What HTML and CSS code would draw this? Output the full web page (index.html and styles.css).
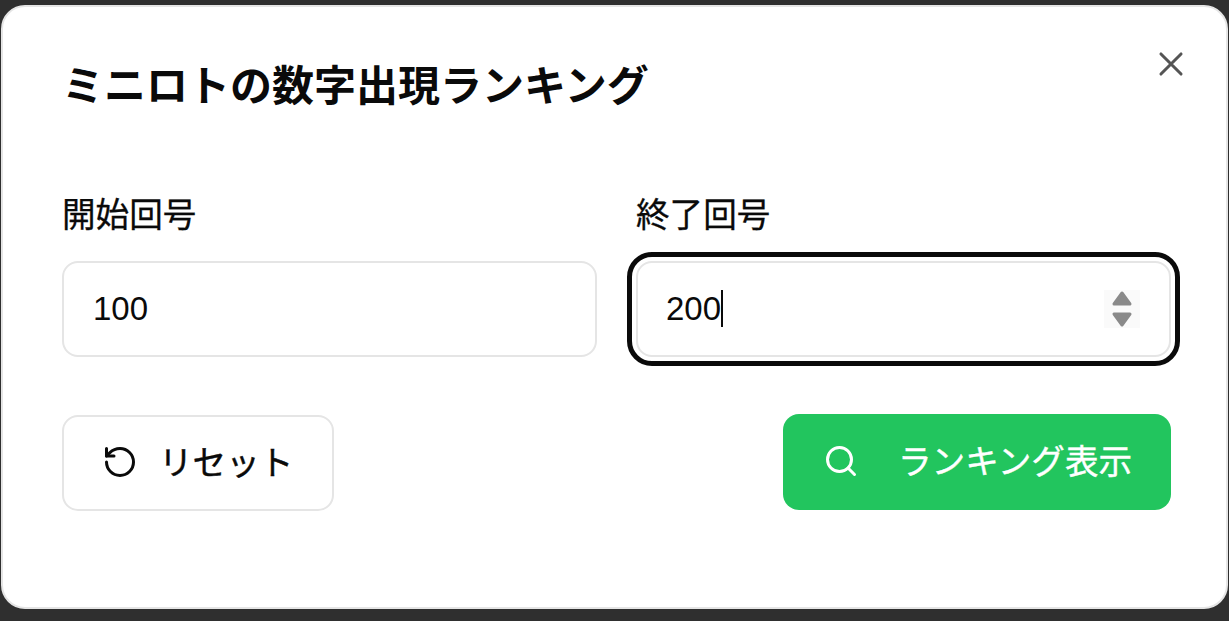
FILE: index.html
```html
<!DOCTYPE html>
<html lang="ja">
<head>
<meta charset="utf-8">
<title>ミニロトの数字出現ランキング</title>
<link rel="stylesheet" href="styles.css">
</head>
<body>
<div class="modal">
  <button class="close" aria-label="閉じる">
    <svg viewBox="0 0 24 24" class="icon"><path d="M5.3 5.3l13.4 13.4M18.7 5.3L5.3 18.7"/></svg>
  </button>
  <h1 class="title">ミニロトの数字出現ランキング</h1>
  <div class="fields">
    <label class="field">
      <span class="label">開始回号</span>
      <input class="input" type="text" value="100">
    </label>
    <label class="field">
      <span class="label">終了回号</span>
      <span class="input-wrap">
        <input class="input input-focus" type="text" value="200">
        <span class="caret"></span>
        <span class="spinner">
          <svg viewBox="0 0 36 38" width="36" height="38"><path d="M18 3 L26 14 H10 Z M10 24 H26 L18 35 Z"/></svg>
        </span>
      </span>
    </label>
  </div>
  <div class="actions">
    <button class="btn btn-reset">
      <svg viewBox="0 0 24 24" class="icon"><path d="M3 12a9 9 0 1 0 9-9 9.75 9.75 0 0 0-6.74 2.74L3 8"/><path d="M3 3v5h5"/></svg>
      <span class="btn-text">リセット</span>
    </button>
    <button class="btn btn-show">
      <svg viewBox="0 0 24 24" class="icon"><circle cx="11" cy="11" r="8"/><path d="m21 21-4.3-4.3"/></svg>
      <span class="btn-text">ランキング表示</span>
    </button>
  </div>
</div>
</body>
</html>
```
FILE: styles.css
```css
* { box-sizing: border-box; }
html, body { margin: 0; height: 100%; }
body {
  background: #2f2f2f;
  padding: 5px 1px 12px 1px;
  font-family: "Liberation Sans", "Noto Sans CJK JP", sans-serif;
  color: #0a0a0a;
  overflow: hidden;
}
.modal {
  position: relative;
  height: 604px;
  background: #fff;
  border: 2px solid #e5e5e5;
  border-radius: 24px;
  padding: 56px 55px 0 59px;
}
.icon {
  width: 36px;
  height: 36px;
  flex: none;
  fill: none;
  stroke: currentColor;
  stroke-width: 2;
  stroke-linecap: round;
  stroke-linejoin: round;
}
.close {
  position: absolute;
  top: 39px;
  right: 37px;
  width: 36px;
  height: 36px;
  padding: 0;
  border: 0;
  background: none;
  color: #555;
  display: block;
}
.title {
  margin: 0;
  font-size: 42px;
  line-height: 48px;
  font-weight: 700;
}
.fields {
  display: grid;
  grid-template-columns: 1fr 1fr;
  gap: 39px;
  margin-top: 87px;
}
.field { display: flex; flex-direction: column; gap: 27px; }
.label {
  font-size: 33.6px;
  line-height: 36px;
  font-weight: 400;
  -webkit-text-stroke: 0.3px currentColor;
}
.input-wrap { position: relative; display: block; }
.input {
  display: block;
  width: 100%;
  height: 96px;
  padding: 0 29px;
  border: 2px solid #e5e5e5;
  border-radius: 16px;
  background: #fff;
  color: #0a0a0a;
  font: 33px "Liberation Sans", "Noto Sans CJK JP", sans-serif;
}
.input:focus { outline: none; }
.input-focus {
  padding-left: 28px;
  outline: 5px solid #0a0a0a;
  outline-offset: 4px;
}
.caret {
  position: absolute;
  left: 85px;
  top: 29px;
  width: 2px;
  height: 37px;
  background: #0a0a0a;
}
.spinner {
  position: absolute;
  right: 31px;
  top: 29px;
  width: 36px;
  height: 38px;
  background: #fafafa;
}
.spinner svg { display: block; fill: #8a8a8a; stroke: #8a8a8a; stroke-width: 3; stroke-linejoin: round; }
.actions {
  display: flex;
  justify-content: space-between;
  align-items: flex-start;
  margin-top: 58px;
}
.btn {
  display: flex;
  align-items: center;
  height: 96px;
  border-radius: 16px;
  font: 400 33.6px "Liberation Sans", "Noto Sans CJK JP", sans-serif;
  padding: 0 38px 2px;
}
.btn-text {
  white-space: nowrap;
  margin-bottom: 4px;
  -webkit-text-stroke: 0.4px currentColor;
}
.btn-reset {
  width: 272px;
  gap: 21px;
  background: #fff;
  border: 2px solid #e5e5e5;
  color: #0a0a0a;
}
.btn-show {
  margin-top: -1px;
  width: 388px;
  gap: 39px;
  padding: 0 40px 2px;
  background: #22c55e;
  border: 0;
  color: #fff;
}
```
